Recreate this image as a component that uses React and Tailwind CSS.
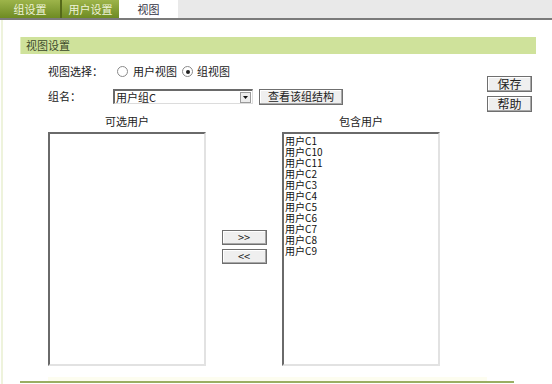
const font = { fontFamily: '"SimSun", "Noto Sans CJK SC", sans-serif' };

const users = ["用户C1", "用户C10", "用户C11", "用户C2", "用户C3", "用户C4", "用户C5", "用户C6", "用户C7", "用户C8", "用户C9"];

function Radio({ checked }) {
  return (
    <span className="w-[11px] h-[11px] rounded-full border border-[#8a8a8a] bg-white flex items-center justify-center shrink-0">
      {checked && <span className="w-[4px] h-[4px] rounded-full bg-[#222]" />}
    </span>
  );
}

function Btn({ children, className = "" }) {
  return (
    <div
      className={
        "flex items-center justify-center border border-[#6f6f6f] bg-[#efefef] text-[11px] leading-none text-[#222] shadow-[inset_-1px_-1px_0_#a8a8a8,inset_1px_1px_0_#ffffff] " +
        className
      }
    >
      {children}
    </div>
  );
}

function ListBox({ items = [] }) {
  return (
    <div className="w-[158px] h-[234px] bg-white border-t-2 border-l-2 border-t-[#6a6a6a] border-l-[#6a6a6a] border-r-2 border-b-2 border-r-[#e2e2e2] border-b-[#e2e2e2] pt-[1px] pl-[1px] flex flex-col">
      {items.map((u) => (
        <div key={u} className="h-[11px] flex items-center text-[10px] leading-none text-[#111]">
          {u}
        </div>
      ))}
    </div>
  );
}

export default function App() {
  return (
    <div className="w-[552px] h-[384px] bg-white overflow-hidden" style={font}>
      {/* tabs */}
      <div className="h-[20px] bg-[#e9e9e9] border-b-2 border-[#7b7b7b] flex">
        <div className="w-[60px] h-[18px] bg-gradient-to-b from-[#9db44a] to-[#6e8b22] text-[#eef3d8] text-[11px] flex items-center justify-center">
          组设置
        </div>
        <div className="w-[2px] h-[18px] bg-[#55691a]" />
        <div className="w-[57px] h-[18px] bg-gradient-to-b from-[#9db44a] to-[#6e8b22] text-[#eef3d8] text-[11px] flex items-center justify-center">
          用户设置
        </div>
        <div className="w-[59px] h-[18px] bg-white text-[#334] text-[11px] flex items-center justify-center">
          视图
        </div>
      </div>

      <div className="flex h-[364px]">
        <div className="w-[2px] ml-[1px] bg-[#eef3dc]" />
        <div className="flex-1 pl-[17px] pr-[16px] pt-[17px] flex flex-col">
          <div className="h-[18px] bg-[#cfe29b] border-l border-[#e3eec0] text-[11px] text-[#3c4a2a] flex items-center pl-[5px]">
            视图设置
          </div>

          <div className="flex flex-1">
            <div className="w-[467px] pl-[28px] flex flex-col">
              <div className="mt-[10px] h-[15px] flex items-center text-[11px] text-[#222]">
                <span className="w-[64px] shrink-0">视图选择：</span>
                <span className="ml-[5px]"><Radio /></span>
                <span className="ml-[5px]">用户视图</span>
                <span className="ml-[5px]"><Radio checked /></span>
                <span className="ml-[4px]">组视图</span>
              </div>

              <div className="mt-[9px] h-[17px] flex items-center text-[11px] text-[#222]">
                <span className="w-[65px] shrink-0">组名：</span>
                <div className="w-[140px] h-[15px] bg-white border-t-2 border-l-2 border-t-[#6a6a6a] border-l-[#6a6a6a] border-r border-b border-r-[#dcdcdc] border-b-[#dcdcdc] flex items-center">
                  <span className="flex-1 pl-[1px] leading-none">用户组C</span>
                  <span className="w-[11px] h-[11px] mr-[1px] bg-[#ececec] border border-[#9a9a9a] flex items-center justify-center">
                    <svg width="5" height="3" viewBox="0 0 5 3">
                      <path d="M0 0h5L2.5 3z" fill="#111" />
                    </svg>
                  </span>
                </div>
                <Btn className="ml-[6px] w-[84px] h-[16px]">查看该组结构</Btn>
              </div>

              <div className="mt-[10px] flex text-[11px] text-[#222] leading-[12px]">
                <div className="w-[158px] text-center">可选用户</div>
                <div className="w-[76px]" />
                <div className="w-[158px] text-center">包含用户</div>
              </div>

              <div className="mt-[5px] flex">
                <ListBox />
                <div className="w-[76px] flex flex-col items-center pt-[98px]">
                  <Btn className="w-[45px] h-[15px]">&gt;&gt;</Btn>
                  <Btn className="w-[45px] h-[15px] mt-[4px]">&lt;&lt;</Btn>
                </div>
                <ListBox items={users} />
              </div>

              <div className="mt-[11px] h-[4px] bg-[#fdfdf0]" />
            </div>

            <div className="flex flex-col pt-[22px]">
              <Btn className="w-[45px] h-[16px] text-[12px]">保存</Btn>
              <Btn className="w-[45px] h-[16px] mt-[4px] text-[12px]">帮助</Btn>
            </div>
          </div>
          <div className="h-[2px] w-[494px] bg-[#9aae63] mb-[1px]" />
        </div>
      </div>
    </div>
  );
}
